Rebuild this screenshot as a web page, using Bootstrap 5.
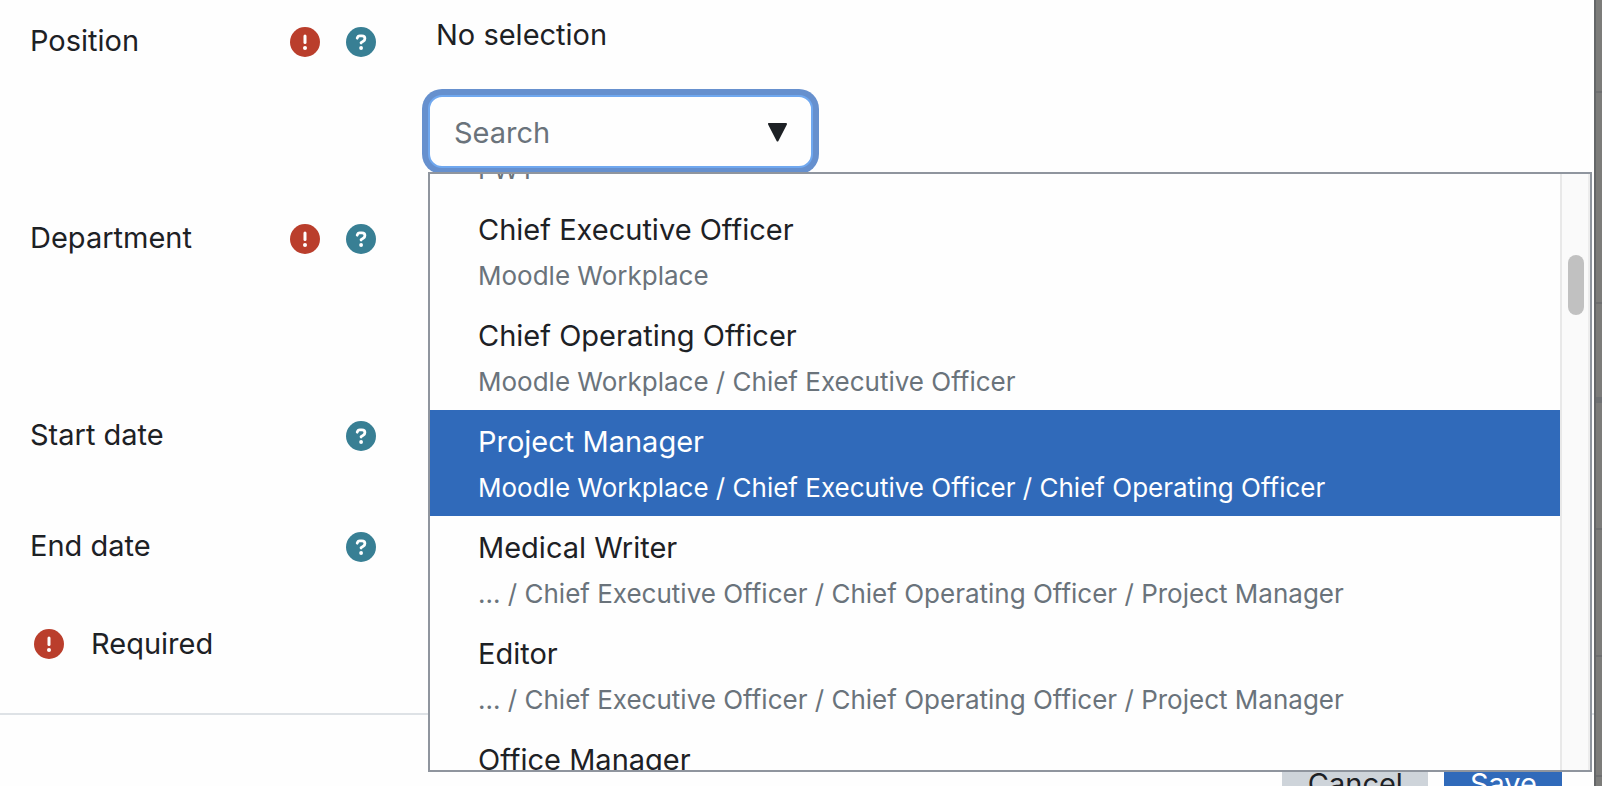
<!DOCTYPE html>
<html lang="en">
<head>
<meta charset="utf-8">
<meta name="viewport" content="width=device-width, initial-scale=1">
<title>Job assignment</title>
<link href="https://cdn.jsdelivr.net/npm/bootstrap@5.3.0/dist/css/bootstrap.min.css" rel="stylesheet">
<style>
  body { font-family: Inter, "Liberation Sans", sans-serif; font-size: 29px; line-height: 44px; color: #1d2125; background: #fefefe; }
  .page-shell { height: 100vh; }
  .dialog-pane { background: #fefefe; }
  .backdrop-strip { width: 8px; background: #7c7c7a; border-left: 2px solid #646668; }
  .backdrop-cell { flex: none; height: 127px; border-bottom: 2px solid #6e6f70; }
  .backdrop-cell.head-cell { height: 93px; }
  .backdrop-cell.filter-cell { height: 211px; }
  .backdrop-cell.title-cell { height: 99px; border-bottom: 6px solid #6f7173; }
  .backdrop-cell.last-cell { height: 120px; }
  .field-row { display: grid; grid-template-columns: 346px 1fr; column-gap: 52px; padding: 0 30px; }
  .row-tall { min-height: 197px; }
  .row-date { min-height: 111px; }
  .row-end { min-height: 98px; }
  .label-cell { height: 44px; }
  .icon-dot { width: 30px; height: 30px; display: block; }
  .label-icons { gap: 26px; padding-top: 1px; }
  .help-btn { line-height: 0; }
  .form-area { padding-top: 19px; }
  .required-note { padding: 0 30px 0 34px; gap: 27px; height: 44px; margin-bottom: 47px; }
  .choice { margin-top: -6px; padding-left: 8px; }
  .picker { position: relative; margin-top: 38px; }
  .search-box { position: relative; width: 385px; }
  .search-box .form-control { height: 73px; padding: 2px 64px 0 24px; border: 2px solid #70a8ef; border-radius: 14px; font-size: 29px; color: #1d2125; background: #fefefe; box-shadow: 0 0 0 6px #6690ce; }
  .search-box .form-control::placeholder { color: #6a737b; opacity: 1; }
  .search-box button { position: absolute; top: 0; right: 25px; height: 75px; line-height: 0; }
  .options-menu { position: absolute; z-index: 5; top: 77px; left: 0; right: -28px; height: 600px; border: 2px solid #8f959e; background: #fefefe; }
  .options-list { overflow: hidden; }
  .option-item { height: 106px; padding: 10px 48px 0; white-space: nowrap; }
  .option-item small { display: block; font-size: 26px; line-height: 48px; color: #6a737b; }
  .option-item.active-item, .option-item.active-item small { background: #306aba; color: #fff; }
  .scroll-track { width: 30px; padding: 81px 4px 0 6px; background: #fafafa; border-left: 2px solid #e8e8e8; border-right: 2px solid #ededed; }
  .scroll-thumb { height: 60px; border-radius: 8px; background: #c1c1c1; }
  .dialog-foot { border-top: 2px solid #dee2e6; padding: 32px 32px 30px; gap: 16px; }
  .foot-btn { height: 74px; padding: 0 25px 0 26px; border: 0; border-radius: 0; font-size: 29px; line-height: 44px; color: #1d2125; background: #ced4da; }
  .foot-btn.save { color: #fff; background: #306aba; }
</style>
</head>
<body>
<svg width="0" height="0" class="d-none" aria-hidden="true">
  <symbol id="ico-required" viewBox="0 0 30 30">
    <circle cx="15" cy="15" r="15" fill="#ba3e2c"/>
    <path d="M15 9v6.600" stroke="#fff" stroke-width="3" stroke-linecap="round"/>
    <circle cx="15" cy="21" r="2" fill="#fff"/>
  </symbol>
  <symbol id="ico-help" viewBox="0 0 30 30">
    <circle cx="15" cy="15" r="15" fill="#387f94"/>
    <path d="M11.200 11.200c.4-1.500 1.300-2.300 2.600-2.300h2.100c1.800 0 3 1.200 3 2.700 0 1.200-.6 1.900-1.500 2.500l-2.300 1.500v.5" fill="none" stroke="#fff" stroke-width="2.800" stroke-linecap="round" stroke-linejoin="round"/>
    <circle cx="15.100" cy="21" r="1.900" fill="#fff"/>
  </symbol>
</svg>
<div class="page-shell d-flex overflow-hidden">
  <main class="dialog-pane flex-grow-1">
    <form class="form-area">
      <div class="field-row row-tall">
        <div class="label-cell d-flex align-items-center justify-content-between">
          <label for="position">Position</label>
          <div class="label-icons d-flex">
            <svg class="icon-dot" role="img" aria-label="Required"><use href="#ico-required"/></svg>
            <button type="button" class="btn p-0 border-0 help-btn" aria-label="Help with position"><svg class="icon-dot"><use href="#ico-help"/></svg></button>
          </div>
        </div>
        <div>
          <div class="choice">No selection</div>
          <div class="picker">
            <div class="search-box">
              <input id="position" class="form-control" type="text" placeholder="Search" role="combobox" aria-expanded="true" aria-controls="position-options">
              <button type="button" class="btn p-0 border-0" aria-label="Show options"><svg width="21" height="21" viewBox="0 0 21 21"><path d="M2 2h17l-8.500 16.500z" fill="#1d2125" stroke="#1d2125" stroke-width="2" stroke-linejoin="round"/></svg></button>
            </div>
            <div class="options-menu d-flex">
              <ul id="position-options" class="options-list list-unstyled flex-grow-1 mb-0" role="listbox">
                <li class="option-item" role="option"><br><small>FWT</small></li>
                <li class="option-item" role="option">Chief Executive Officer<small>Moodle Workplace</small></li>
                <li class="option-item" role="option">Chief Operating Officer<small>Moodle Workplace / Chief Executive Officer</small></li>
                <li class="option-item active-item" role="option" aria-selected="true">Project Manager<small>Moodle Workplace / Chief Executive Officer / Chief Operating Officer</small></li>
                <li class="option-item" role="option">Medical Writer<small>... / Chief Executive Officer / Chief Operating Officer / Project Manager</small></li>
                <li class="option-item" role="option">Editor<small>... / Chief Executive Officer / Chief Operating Officer / Project Manager</small></li>
                <li class="option-item" role="option">Office Manager</li>
              </ul>
              <div class="scroll-track"><div class="scroll-thumb"></div></div>
            </div>
          </div>
        </div>
      </div>
      <div class="field-row row-tall">
        <div class="label-cell d-flex align-items-center justify-content-between">
          <span>Department</span>
          <div class="label-icons d-flex">
            <svg class="icon-dot" role="img" aria-label="Required"><use href="#ico-required"/></svg>
            <button type="button" class="btn p-0 border-0 help-btn" aria-label="Help with department"><svg class="icon-dot"><use href="#ico-help"/></svg></button>
          </div>
        </div>
      </div>
      <div class="field-row row-date">
        <div class="label-cell d-flex align-items-center justify-content-between">
          <span>Start date</span>
          <div class="label-icons d-flex">
            <button type="button" class="btn p-0 border-0 help-btn" aria-label="Help with start date"><svg class="icon-dot"><use href="#ico-help"/></svg></button>
          </div>
        </div>
      </div>
      <div class="field-row row-end">
        <div class="label-cell d-flex align-items-center justify-content-between">
          <span>End date</span>
          <div class="label-icons d-flex">
            <button type="button" class="btn p-0 border-0 help-btn" aria-label="Help with end date"><svg class="icon-dot"><use href="#ico-help"/></svg></button>
          </div>
        </div>
      </div>
      <div class="required-note d-flex align-items-center">
        <svg class="icon-dot" aria-hidden="true"><use href="#ico-required"/></svg>
        <span>Required</span>
      </div>
      <div class="dialog-foot d-flex justify-content-end">
        <button type="button" class="btn foot-btn">Cancel</button>
        <button type="submit" class="btn foot-btn save">Save</button>
      </div>
    </form>
  </main>
  <div class="backdrop-strip d-flex flex-column" aria-hidden="true">
    <div class="backdrop-cell head-cell"></div>
    <div class="backdrop-cell filter-cell"></div>
    <div class="backdrop-cell title-cell"></div>
    <div class="backdrop-cell"></div>
    <div class="backdrop-cell"></div>
    <div class="backdrop-cell last-cell"></div>
  </div>
</div>
<script src="https://cdn.jsdelivr.net/npm/bootstrap@5.3.0/dist/js/bootstrap.bundle.min.js"></script>
<script>
  document.getElementById('position-options').scrollTop = 82;
</script>
</body>
</html>
